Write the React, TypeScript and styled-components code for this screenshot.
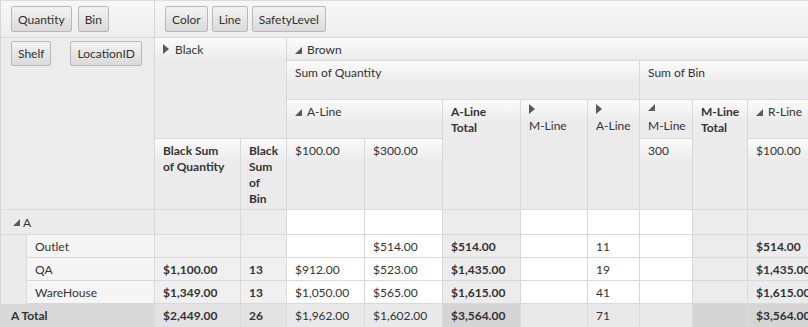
import styled, { createGlobalStyle } from "styled-components";

const COLUMNS =
  "26px 128px 86px 46px 78px 78px 78px 67px 52px 53px 55px 90px";

const GlobalStyle = createGlobalStyle`
  body {
    margin: 0;
    background: #fff;
    font-family: Lato, "Open Sans", sans-serif;
    font-size: 12px;
    color: #333;
  }
`;

const PivotBlock = styled.div`
  width: 808px;
  height: 327px;
  overflow: hidden;
  box-sizing: border-box;
  border-left: 1px solid #d6d6d6;
  border-top: 1px solid #dcdcdc;
`;

const ToolbarRow = styled.div`
  display: flex;
  width: 900px;
  height: 36px;
  border-bottom: 1px solid #d6d6d6;
  background: linear-gradient(to bottom, #f8f8f8, #ededed);
`;

const FieldArea = styled.div<{ $width?: number; $gap: number }>`
  display: flex;
  align-items: center;
  gap: ${(p) => p.$gap}px;
  padding: 0 10px;
  box-sizing: border-box;
  ${(p) =>
    p.$width
      ? `width: ${p.$width}px; flex: none; border-right: 1px solid #d6d6d6;`
      : "flex: 1;"}
`;

const FieldButton = styled.div<{ $height?: number }>`
  height: ${(p) => p.$height ?? 26}px;
  box-sizing: border-box;
  padding: 0 6px;
  display: flex;
  align-items: center;
  border: 1px solid #b8b8b8;
  border-radius: 2px;
  background: linear-gradient(to bottom, #f3f3f3, #dadada);
  color: #333;
  white-space: nowrap;
`;

const HeadGrid = styled.div`
  display: grid;
  grid-template-columns: ${COLUMNS};
  grid-template-rows: 23px 39px 39px 71px;
  width: max-content;
`;

const RowFieldPanel = styled.div`
  grid-column: 1 / 3;
  grid-row: 1 / 5;
  display: flex;
  align-items: flex-start;
  gap: 19px;
  padding: 3px 10px 0;
  background: #ececec;
  border-right: 1px solid #d9d9d9;
  border-bottom: 1px solid #d9d9d9;
`;

const HeaderCell = styled.div<{ $col: string; $row: string; $bold?: boolean }>`
  grid-column: ${(p) => p.$col};
  grid-row: ${(p) => p.$row};
  box-sizing: border-box;
  padding: 4px 8px 0 8px;
  line-height: 16px;
  font-weight: ${(p) => (p.$bold ? 700 : 400)};
  background: linear-gradient(to bottom, #fbfbfb 0, #ebebeb 22px);
  border-right: 1px solid #d9d9d9;
  border-bottom: 1px solid #d9d9d9;
  overflow: hidden;
`;

const Word = styled.span`
  white-space: nowrap;
`;

const ToggleWrap = styled.span<{ $stacked?: boolean }>`
  display: ${(p) => (p.$stacked ? "block" : "inline-block")};
  width: 12px;
  height: ${(p) => (p.$stacked ? "14px" : "auto")};
  line-height: 0;
  vertical-align: 0;
  svg {
    display: block;
  }
`;

const BodyGrid = styled.div`
  display: grid;
  grid-template-columns: ${COLUMNS};
  grid-template-rows: 25px 23px 23px 23px 24px;
  width: max-content;
`;

type Tone = "plain" | "sub" | "total";

const toneColor = (tone: Tone, grand?: boolean) => {
  if (grand) {
    if (tone === "total") return "#d5d5d5";
    if (tone === "sub") return "#e3e3e3";
    return "#e9e9e9";
  }
  if (tone === "total") return "#ececec";
  if (tone === "sub") return "#f0f0f0";
  return "#ffffff";
};

const DataCell = styled.div<{ $tone: Tone; $grand?: boolean; $bold?: boolean }>`
  display: flex;
  align-items: center;
  padding-left: 8px;
  white-space: nowrap;
  overflow: hidden;
  box-sizing: border-box;
  font-weight: ${(p) => (p.$bold ? 700 : 400)};
  background: ${(p) => toneColor(p.$tone, p.$grand)};
  border-right: 1px solid #d9d9d9;
  border-bottom: 1px solid #d9d9d9;
`;

const GroupHead = styled.div<{ $grand?: boolean }>`
  grid-column: 1 / 3;
  display: flex;
  align-items: center;
  padding-left: ${(p) => (p.$grand ? 10 : 12)}px;
  gap: 3px;
  font-weight: ${(p) => (p.$grand ? 700 : 400)};
  background: ${(p) => (p.$grand ? "#d9d9d9" : "#ebebeb")};
  border-right: 1px solid #d9d9d9;
  border-bottom: 1px solid #d9d9d9;
`;

const Indent = styled.div`
  background: #ebebeb;
  border-right: 1px solid #dcdcdc;
`;

const RowLabel = styled.div`
  display: flex;
  align-items: center;
  padding-left: 8px;
  background: #f5f5f5;
  border-right: 1px solid #d9d9d9;
  border-bottom: 1px solid #d9d9d9;
`;

function Expanded() {
  return (
    <svg width="7" height="7" viewBox="0 0 7 7">
      <polygon points="7,0 7,7 0,7" fill="#5a5a5a" />
    </svg>
  );
}

function Collapsed() {
  return (
    <svg width="6" height="10" viewBox="0 0 6 10">
      <polygon points="0,0 6,5 0,10" fill="#5a5a5a" />
    </svg>
  );
}

const columnTones: Tone[] = [
  "sub",
  "sub",
  "plain",
  "plain",
  "total",
  "plain",
  "plain",
  "plain",
  "total",
  "total",
];

const rows = [
  { label: "Outlet", cells: ["", "", "", "$514.00", "$514.00", "", "11", "", "", "$514.00"] },
  {
    label: "QA",
    cells: ["$1,100.00", "13", "$912.00", "$523.00", "$1,435.00", "", "19", "", "", "$1,435.00"],
  },
  {
    label: "WareHouse",
    cells: ["$1,349.00", "13", "$1,050.00", "$565.00", "$1,615.00", "", "41", "", "", "$1,615.00"],
  },
];

const grandTotal = [
  "$2,449.00",
  "26",
  "$1,962.00",
  "$1,602.00",
  "$3,564.00",
  "",
  "71",
  "",
  "",
  "$3,564.00",
];

export default function App() {
  return (
    <PivotBlock>
      <GlobalStyle />
      <ToolbarRow>
        <FieldArea $width={154} $gap={6}>
          <FieldButton>Quantity</FieldButton>
          <FieldButton>Bin</FieldButton>
        </FieldArea>
        <FieldArea $gap={4}>
          <FieldButton>Color</FieldButton>
          <FieldButton>Line</FieldButton>
          <FieldButton>SafetyLevel</FieldButton>
        </FieldArea>
      </ToolbarRow>

      <HeadGrid>
        <RowFieldPanel>
          <FieldButton $height={25}>Shelf</FieldButton>
          <FieldButton $height={25}>LocationID</FieldButton>
        </RowFieldPanel>

        <HeaderCell $col="3 / 5" $row="1 / 4">
          <ToggleWrap>
            <Collapsed />
          </ToggleWrap>
          Black
        </HeaderCell>
        <HeaderCell $col="5 / 13" $row="1">
          <ToggleWrap>
            <Expanded />
          </ToggleWrap>
          Brown
        </HeaderCell>
        <HeaderCell $col="5 / 10" $row="2">
          Sum of Quantity
        </HeaderCell>
        <HeaderCell $col="10 / 13" $row="2">
          Sum of Bin
        </HeaderCell>
        <HeaderCell $col="5 / 7" $row="3">
          <ToggleWrap>
            <Expanded />
          </ToggleWrap>
          <Word>A-Line</Word>
        </HeaderCell>
        <HeaderCell $col="7" $row="3 / 5" $bold>
          <Word>A-Line</Word> Total
        </HeaderCell>
        <HeaderCell $col="8" $row="3 / 5">
          <ToggleWrap $stacked>
            <Collapsed />
          </ToggleWrap>
          <Word>M-Line</Word>
        </HeaderCell>
        <HeaderCell $col="9" $row="3 / 5">
          <ToggleWrap $stacked>
            <Collapsed />
          </ToggleWrap>
          <Word>A-Line</Word>
        </HeaderCell>
        <HeaderCell $col="10" $row="3">
          <ToggleWrap $stacked>
            <Expanded />
          </ToggleWrap>
          <Word>M-Line</Word>
        </HeaderCell>
        <HeaderCell $col="11" $row="3 / 5" $bold>
          <Word>M-Line</Word> Total
        </HeaderCell>
        <HeaderCell $col="12" $row="3">
          <ToggleWrap>
            <Expanded />
          </ToggleWrap>
          <Word>R-Line</Word>
        </HeaderCell>

        <HeaderCell $col="3" $row="4" $bold>
          <Word>Black Sum</Word> <Word>of Quantity</Word>
        </HeaderCell>
        <HeaderCell $col="4" $row="4" $bold>
          Black Sum of Bin
        </HeaderCell>
        <HeaderCell $col="5" $row="4">
          $100.00
        </HeaderCell>
        <HeaderCell $col="6" $row="4">
          $300.00
        </HeaderCell>
        <HeaderCell $col="10" $row="4">
          300
        </HeaderCell>
        <HeaderCell $col="12" $row="4">
          $100.00
        </HeaderCell>
      </HeadGrid>

      <BodyGrid>
        <GroupHead>
          <Expanded />A
        </GroupHead>
        {columnTones.map((tone, i) => (
          <DataCell key={`a-${i}`} $tone={tone === "sub" ? "total" : tone} />
        ))}

        {rows.map((row) => (
          <>
            <Indent key={`${row.label}-i`} />
            <RowLabel key={`${row.label}-l`}>{row.label}</RowLabel>
            {row.cells.map((value, i) => (
              <DataCell
                key={`${row.label}-${i}`}
                $tone={columnTones[i]}
                $bold={columnTones[i] !== "plain"}
              >
                {value}
              </DataCell>
            ))}
          </>
        ))}

        <GroupHead $grand>A Total</GroupHead>
        {grandTotal.map((value, i) => (
          <DataCell
            key={`t-${i}`}
            $tone={columnTones[i]}
            $grand
            $bold={columnTones[i] !== "plain"}
          >
            {value}
          </DataCell>
        ))}
      </BodyGrid>
    </PivotBlock>
  );
}
